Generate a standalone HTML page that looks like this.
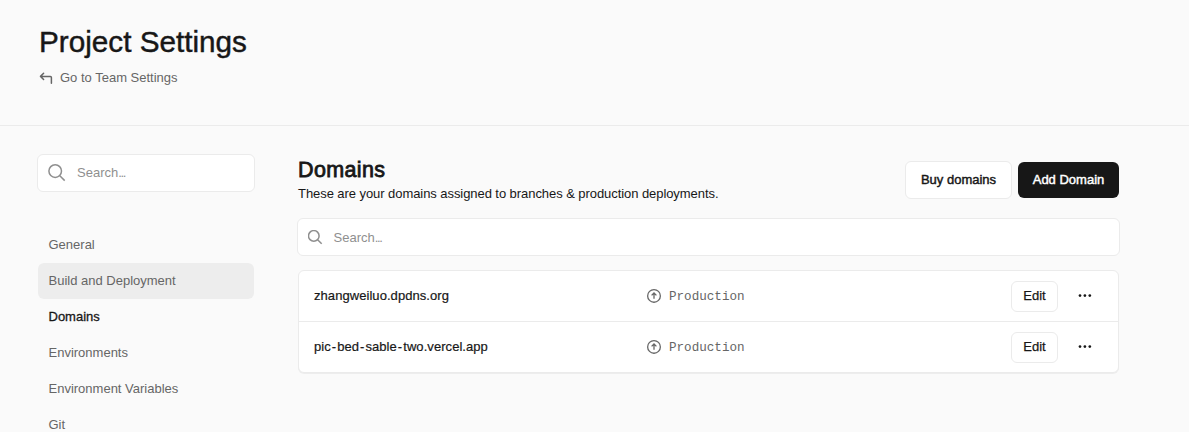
<!DOCTYPE html>
<html><head><meta charset="utf-8">
<style>
*{box-sizing:border-box;margin:0;padding:0}
html,body{width:1189px;height:432px;overflow:hidden;background:#fafafa;font-family:"Liberation Sans",sans-serif;color:#171717}
.abs{position:absolute}
.title{left:39px;top:25px;font-size:29.7px;font-weight:400;color:#171717;white-space:nowrap;-webkit-text-stroke:0.45px #171717}
.back{left:39px;top:70px;font-size:13px;color:#666;white-space:nowrap}
.hr{left:0;top:125px;width:1189px;height:1px;background:#ebebeb}
.sbox{left:37px;top:154px;width:218px;height:38px;background:#fff;border:1px solid #ebebeb;border-radius:6px}
.nav{left:38px;width:216px;height:36px;border-radius:6px;font-size:13px;color:#666;padding-left:10.5px;line-height:36px;white-space:nowrap}
.nav.hl{background:#ededed}
.nav.act{color:#171717;-webkit-text-stroke:0.3px #171717}
.h2{left:298px;top:158px;font-size:21.5px;letter-spacing:0.35px;-webkit-text-stroke:0.8px #171717;color:#171717;white-space:nowrap}
.desc{left:298px;top:186px;font-size:13px;letter-spacing:-0.065px;color:#171717;white-space:nowrap}
.btn{height:36px;border-radius:6px;font-size:13px;text-align:center;line-height:36px;white-space:nowrap}
.buy{left:905px;top:161px;width:107px;height:38px;background:#fff;border:1px solid #ebebeb;color:#171717;-webkit-text-stroke:0.45px #171717}
.add{left:1018px;top:162px;width:101px;background:#171717;color:#fff;-webkit-text-stroke:0.45px #fff}
.msearch{left:297px;top:218px;width:823px;height:38px;background:#fff;border:1px solid #ebebeb;border-radius:6px}
.table{left:298px;top:270px;width:821px;height:103px;background:#fff;border:1px solid #ebebeb;border-radius:6px;box-shadow:0 1px 0 rgba(0,0,0,.05)}
.row{left:0;width:819px;height:50px}
.row+.row{border-top:1px solid #ebebeb;height:51px}
.dom{left:15px;font-size:13px;color:#171717;white-space:nowrap;-webkit-text-stroke:0.2px #171717;letter-spacing:0.06px}
.prod{left:348px;font-family:"Liberation Mono",monospace;font-size:12.6px;color:#666;white-space:nowrap}
.hy{font-style:normal;padding:0 1px}
.edit{left:712px;width:47px;height:31px;border:1px solid #ebebeb;border-radius:6px;background:#fff;font-size:13px;text-align:center;line-height:27px;color:#171717;-webkit-text-stroke:0.25px #171717}
</style></head>
<body>
<div class="abs title">Project Settings</div>
<div class="abs back">
  <svg class="abs" style="left:0;top:1px" width="15" height="15" viewBox="0 0 15 15" fill="none" stroke="#666" stroke-width="1.5" stroke-linecap="round" stroke-linejoin="round"><path d="M4.6 2.3 1.5 5.4 4.6 8.5M1.5 5.4H11.4a1 1 0 0 1 1 1V12.3"/></svg>
  <span class="abs" style="left:21px;top:0">Go to Team Settings</span>
</div>
<div class="abs hr"></div>

<div class="abs sbox">
  <svg class="abs" style="left:10px;top:9px" width="18" height="18" viewBox="0 0 18 18" fill="none" stroke="#8f8f8f" stroke-width="1.5"><circle cx="7.2" cy="7.1" r="6.3"/><path d="M11.8 11.7l4.9 4.9"/></svg>
  <span class="abs" style="left:39px;top:10px;font-size:13px;color:#8f8f8f">Search<i style="font-style:normal;letter-spacing:-1.3px">...</i></span>
</div>

<div class="abs nav" style="top:227px">General</div>
<div class="abs nav hl" style="top:263px">Build and Deployment</div>
<div class="abs nav act" style="top:299px">Domains</div>
<div class="abs nav" style="top:335px">Environments</div>
<div class="abs nav" style="top:371px">Environment Variables</div>
<div class="abs nav" style="top:407px">Git</div>

<div class="abs h2">Domains</div>
<div class="abs desc">These are your domains assigned to branches &amp; production deployments.</div>
<div class="abs btn buy">Buy domains</div>
<div class="abs btn add">Add Domain</div>

<div class="abs msearch">
  <svg class="abs" style="left:10px;top:11px" width="16" height="16" viewBox="0 0 16 16" fill="none" stroke="#8f8f8f" stroke-width="1.5"><circle cx="5.8" cy="5.9" r="5.3"/><path d="M9.6 9.7l4.1 4.1"/></svg>
  <span class="abs" style="left:35.5px;top:11px;font-size:13px;color:#8f8f8f">Search<i style="font-style:normal;letter-spacing:-1.3px">...</i></span>
</div>

<div class="abs table">
  <div class="abs row" style="top:0px">
    <span class="abs dom" style="top:17px">zhangweiluo.dpdns.org</span>
    <svg class="abs" style="left:347px;top:17px" width="16" height="16" viewBox="0 0 16 16" fill="none" stroke="#666" stroke-width="1.3"><circle cx="8" cy="7.9" r="6.35"/><path d="M8 10.7V5.3M5.6 7.4 8 5l2.4 2.4"/></svg>
    <span class="abs prod" style="left:370px;top:19px">Production</span>
    <div class="abs edit" style="top:10px">Edit</div>
    <svg class="abs" style="left:779px;top:21px" width="14" height="8" viewBox="0 0 14 8" fill="#171717"><circle cx="2" cy="3.6" r="1.35"/><circle cx="6.9" cy="3.6" r="1.35"/><circle cx="11.8" cy="3.6" r="1.35"/></svg>
  </div>
  <div class="abs row" style="top:50px">
    <span class="abs dom" style="top:17px">pic<i class="hy">-</i>bed<i class="hy">-</i>sable<i class="hy">-</i>two.vercel.app</span>
    <svg class="abs" style="left:347px;top:17px" width="16" height="16" viewBox="0 0 16 16" fill="none" stroke="#666" stroke-width="1.3"><circle cx="8" cy="7.9" r="6.35"/><path d="M8 10.7V5.3M5.6 7.4 8 5l2.4 2.4"/></svg>
    <span class="abs prod" style="left:370px;top:19px">Production</span>
    <div class="abs edit" style="top:10px">Edit</div>
    <svg class="abs" style="left:779px;top:21px" width="14" height="8" viewBox="0 0 14 8" fill="#171717"><circle cx="2" cy="3.6" r="1.35"/><circle cx="6.9" cy="3.6" r="1.35"/><circle cx="11.8" cy="3.6" r="1.35"/></svg>
  </div>
</div>
</body></html>
